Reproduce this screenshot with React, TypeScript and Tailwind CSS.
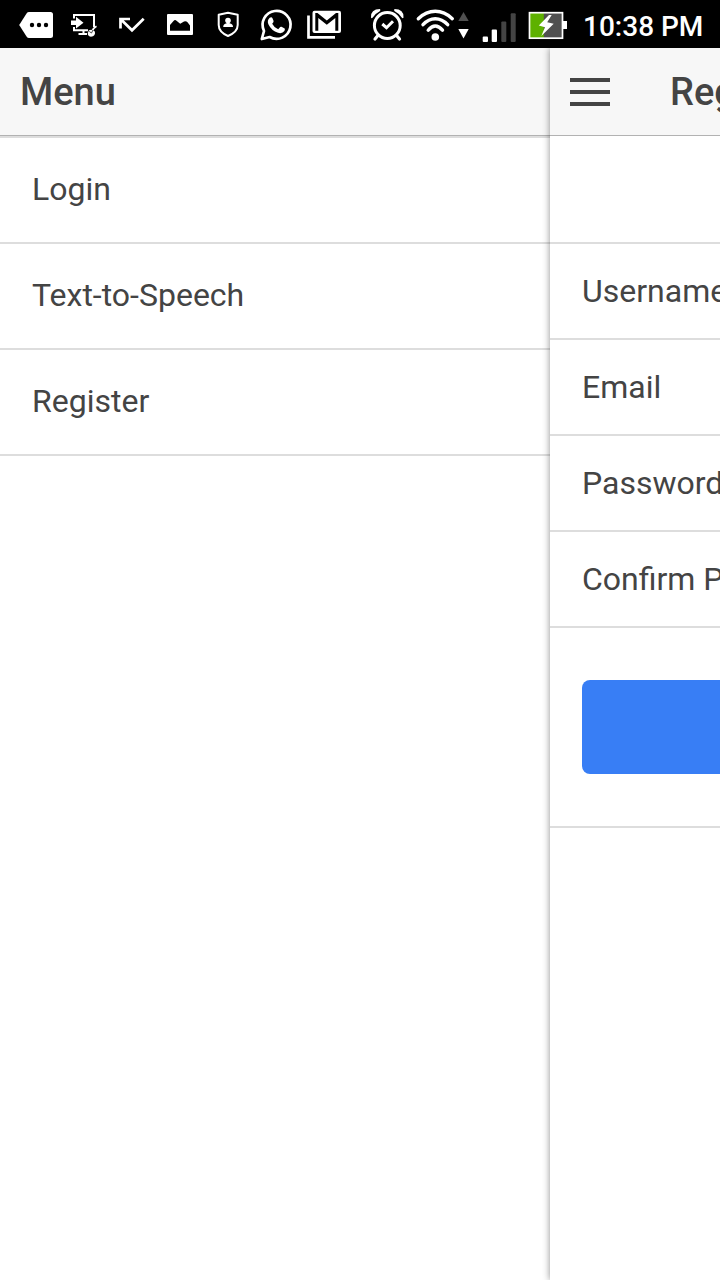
import type { ReactNode } from "react";

function StatusIcon({ x, w, children }: { x: number; w: number; children: ReactNode }) {
  return (
    <svg width={w} height={48} viewBox={`${x} 0 ${w} 48`} fill="#fff" className="block shrink-0">
      {children}
    </svg>
  );
}

function StatusBar() {
  return (
    <div className="flex h-12 w-full shrink-0 items-center bg-black pl-3">
      <StatusIcon x={12} w={48}>
        <path d="M29 12H50.500Q53 12 53 14.500V35.500Q53 38 50.500 38H29Q27.500 38 26.700 36.800L19.200 25L26.700 13.200Q27.500 12 29 12Z" />
        <g fill="#000">
          <circle cx="32" cy="25" r="2.200" />
          <circle cx="39" cy="25" r="2.200" />
          <circle cx="46" cy="25" r="2.200" />
        </g>
      </StatusIcon>
      <StatusIcon x={60} w={48}>
        <path d="M74 18.500V15H94V27M74 27V30.200H88M83.500 31V34M78.500 34H87" fill="none" stroke="#fff" strokeWidth="2" />
        <path d="M71 20.500H76V16.800L83.500 22.700L76 28.500V25H71Z" />
        <path d="M89 30.300Q92 28.800 94.600 31.300Q96 34.500 93 36.300Q89.500 37.500 88 35Q87.300 32.700 89 30.300Z" />
        <path d="M92.500 30.500Q93.500 28 96.500 26.300" fill="none" stroke="#fff" strokeWidth="1.600" />
        <path d="M89.300 31.500L91.500 33M93 30L91.500 33" fill="none" stroke="#000" strokeWidth=".7" />
      </StatusIcon>
      <StatusIcon x={108} w={48}>
        <path d="M130 19H120.500V28.500M121 19.500L132 30.300L143.700 18.700" fill="none" stroke="#fff" strokeWidth="2.700" />
      </StatusIcon>
      <StatusIcon x={156} w={48}>
        <rect x="167" y="14" width="26" height="21" rx="1" />
        <path d="M170 30.700V25L173.500 21Q175 19.300 176.500 20.800L180.200 23.800L184 21.500Q186 20.500 187.500 22.300L190 25.500V30.700Z" fill="#000" />
      </StatusIcon>
      <StatusIcon x={204} w={48}>
        <path d="M228 12.800L237.700 14.700V25Q237.700 32 228 36Q218.700 32 218.700 25V14.700Z" fill="none" stroke="#fff" strokeWidth="2" strokeLinejoin="round" />
        <circle cx="228" cy="20.500" r="2.800" />
        <path d="M226.700 21H229.500V23.300Q233 24 233 27H223.200Q223.200 24 226.700 23.300Z" />
      </StatusIcon>
      <StatusIcon x={252} w={48}>
        <path d="M261.800 39L264 31A14 14 0 1 1 269.600 37Z" fill="none" stroke="#fff" strokeWidth="2.700" strokeLinejoin="round" />
        <path d="M269.700 17.700Q271.800 16.500 272.600 18.500L273.600 21Q273.800 22 272.200 23.700Q274 27.500 278.200 29.200L280.200 27Q280.800 26.500 281.500 26.800L284.700 28.500Q285.200 29 284.400 31Q282.200 34 278 32.800Q271.500 30.800 268.500 24.500Q266.700 20.500 269.700 17.700Z" />
      </StatusIcon>
      <StatusIcon x={300} w={48}>
        <path d="M308.500 15.500V37.300H335" fill="none" stroke="#fff" strokeWidth="2.700" />
        <path d="M314.500 10.700H339Q341 10.700 341 12.700V31Q341 33 339 33H314.500Q312.500 33 312.500 31V12.700Q312.500 10.700 314.500 10.700Z" />
        <path d="M315.300 30.700V13H317.500L326.800 20.500L336 13H338.300V30.700H335.300V18L326.800 24.700L318.300 18V30.700Z" fill="#000" />
      </StatusIcon>
      <div className="w-3 shrink-0" />
      <StatusIcon x={360} w={52}>
        <g fill="none" stroke="#fff" strokeLinecap="round">
          <circle cx="387.300" cy="25.500" r="12.900" strokeWidth="3" />
          <path d="M377.500 36L375 39M397 36L399.500 39" strokeWidth="3.200" />
          <path d="M382.300 24L386.500 27.700L393 21.300" strokeWidth="3" strokeLinecap="butt" />
        </g>
        <path d="M371 17.500Q370.500 9 380 9Q381 10.300 379.800 11.300Q375.500 13.500 372.800 17.500Q371.500 18.800 371 17.500ZM403.500 17.500Q404 9 394.500 9Q393.500 10.300 394.700 11.300Q399 13.500 401.700 17.500Q403 18.800 403.500 17.500Z" />
      </StatusIcon>
      <StatusIcon x={412} w={60}>
        <g fill="none" stroke="#fff" strokeWidth="3.400" strokeLinecap="round">
          <path d="M418.300 18.700Q426 11.300 435.300 11.300Q444.500 11.300 452.300 18.700" />
          <path d="M423 24.700Q428.500 18.700 435.300 18.700Q442 18.700 447.700 24.700" />
          <path d="M428.200 30.200Q431.500 26 435.300 26Q439 26 442.500 30.200" />
        </g>
        <circle cx="435.300" cy="37" r="3.800" />
        <path d="M463.500 12L468.700 21H458.300Z" fill="#505050" />
        <path d="M458.300 29H468.700L463.500 38.500Z" />
      </StatusIcon>
      <StatusIcon x={472} w={52}>
        <rect x="482.700" y="36.500" width="5.300" height="5.500" rx="1" />
        <rect x="491.700" y="29.500" width="5.300" height="12.500" rx="1" />
        <rect x="501.300" y="21.500" width="5" height="20.500" rx="1" fill="#444" />
        <rect x="510.700" y="13.300" width="5" height="28.700" rx="1" fill="#444" />
      </StatusIcon>
      <StatusIcon x={524} w={48}>
        <rect x="529.500" y="12.700" width="33" height="25.500" fill="#505050" />
        <rect x="529.500" y="12.700" width="14.300" height="25.500" fill="#5eb100" />
        <rect x="529.500" y="12.700" width="33" height="25.500" fill="none" stroke="#fff" strokeWidth="1.700" />
        <rect x="563" y="21" width="4" height="8" />
        <path d="M549 15L538.800 25.500L545 27.200L541.300 36L553.700 23.700L547.200 22.300L551.700 15Z" />
      </StatusIcon>
      <span className="ml-[11px] whitespace-nowrap pt-[5px] text-[28px] font-medium leading-8 text-white">10:38 PM</span>
    </div>
  );
}

const menuItems = ["Login", "Text-to-Speech", "Register"];
const fields = ["Username", "Email", "Password", "Confirm Password"];

export default function App() {
  return (
    <div className="flex h-[1280px] w-[720px] flex-col overflow-hidden bg-white font-['Roboto',sans-serif] text-[#444]">
      <StatusBar />
      <div className="flex min-h-0 flex-1">
        <nav className="w-[550px] shrink-0">
          <header className="flex h-22 items-center border-b border-[#b2b2b2] bg-[#f7f7f7] pl-5 pt-px text-[38px] font-medium">
            <h1>Menu</h1>
          </header>
          <ul className="border-b-2 border-[#ddd]">
            {menuItems.map((item) => (
              <li key={item} className="flex h-[106px] items-center border-t-2 border-[#ddd] pb-0.5 pl-8 text-[32px]">
                {item}
              </li>
            ))}
          </ul>
        </nav>
        <main className="relative w-[170px] shrink-0 bg-white shadow-[0_0_7px_rgba(0,0,0,0.45)]">
          <header className="flex h-22 items-center overflow-hidden border-b border-[#b2b2b2] bg-[#f7f7f7] pl-5 pt-px">
            <div className="flex w-10 shrink-0 flex-col gap-2">
              <div className="h-1 bg-[#444]" />
              <div className="h-1 bg-[#444]" />
              <div className="h-1 bg-[#444]" />
            </div>
            <h2 className="ml-[60px] whitespace-nowrap text-[38px] font-medium">Register</h2>
          </header>
          <form className="mt-[106px] overflow-hidden border-b-2 border-[#ddd]">
            {fields.map((field) => (
              <label key={field} className="flex h-24 items-center whitespace-nowrap border-t-2 border-[#ddd] pl-8 text-[32px]">
                {field}
              </label>
            ))}
            <div className="h-[200px] border-t-2 border-[#ddd] pl-8 pt-[52px]">
              <button type="button" aria-label="Register" className="block h-[94px] w-[300px] rounded-lg bg-[#387ef5]" />
            </div>
          </form>
        </main>
      </div>
    </div>
  );
}
